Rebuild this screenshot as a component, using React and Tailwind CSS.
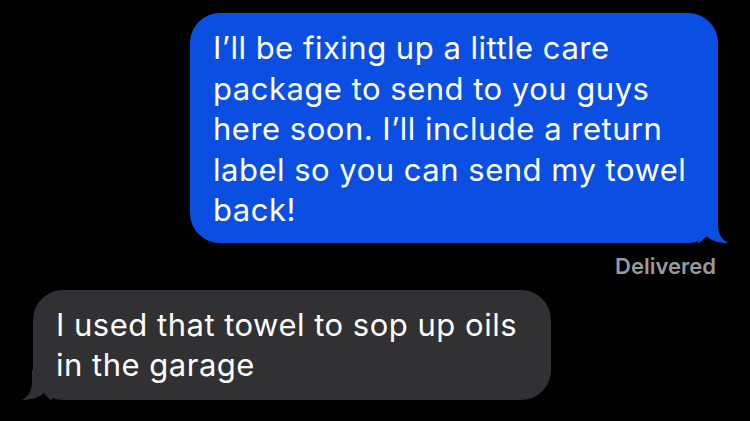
export default function App() {
  return (
    <div
      className="w-[750px] h-[421px] bg-black overflow-hidden flex flex-col"
      style={{ fontFamily: 'Inter, "Noto Sans", sans-serif' }}
    >
      {/* Outgoing */}
      <div className="self-end mr-[32px] mt-[13px] relative">
        <div className="w-[528px] bg-[#0b4fe2] text-white rounded-[30px] pl-[23px] pr-[14px] pt-[15px] pb-[12px] text-[31px] leading-[40.5px] tracking-[0.5px]">
          I’ll be fixing up a little care
          <br />
          package to send to you guys
          <br />
          here soon. I’ll include a return
          <br />
          label so you can send my towel
          <br />
          back!
        </div>
        <svg className="absolute right-[-10px] bottom-0" width="30" height="30" viewBox="0 0 30 30">
          <path d="M0 0 L20 0 L20 12 C20 21 24 27 30 30 C21 30 14 28 8 23 C5 27 2 30 0 30 Z" fill="#0b4fe2" />
        </svg>
      </div>

      <div className="self-end mr-[34px] mt-[11px] text-[22px] leading-[24px] font-semibold text-[#98989e]">
        Delivered
      </div>

      {/* Incoming */}
      <div className="self-start ml-[33px] mt-[12px] relative">
        <div className="bg-[#313134] text-white rounded-[30px] pl-[23px] pr-[34px] pt-[15px] pb-[14px] text-[31px] leading-[40.5px] tracking-[0.5px]">
          I used that towel to sop up oils
          <br />
          in the garage
        </div>
        <svg className="absolute left-[-11px] bottom-0" width="30" height="30" viewBox="0 0 30 30">
          <path d="M30 0 L10 0 L10 12 C10 21 6 27 0 30 C9 30 16 28 22 23 C25 27 28 30 30 30 Z" fill="#313134" />
        </svg>
      </div>
    </div>
  );
}
